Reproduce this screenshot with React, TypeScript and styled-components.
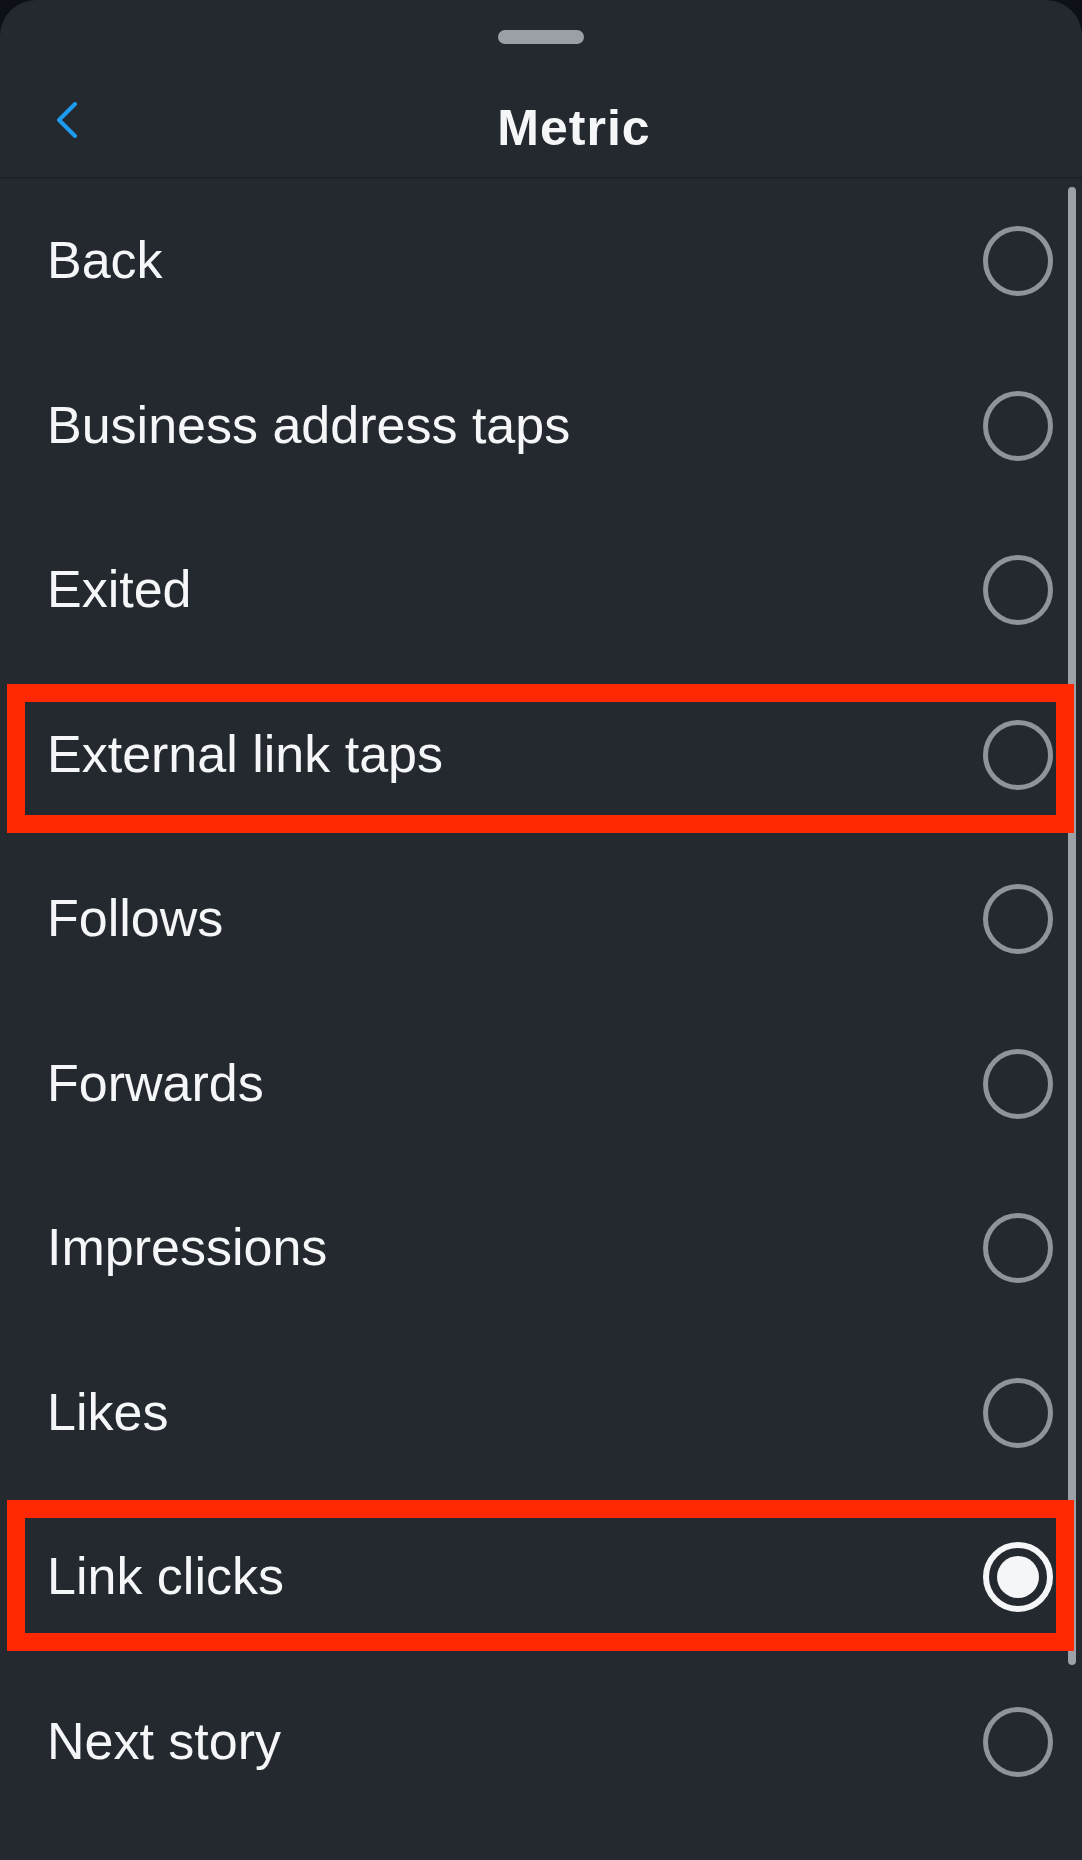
import React from 'react';
import styled, { createGlobalStyle } from 'styled-components';

const GlobalStyle = createGlobalStyle`
	html, body {
		margin: 0;
		padding: 0;
		background: #0d1117;
	}
	body {
		font-family: 'Liberation Sans', Arial, sans-serif;
		-webkit-font-smoothing: antialiased;
	}
`;

const Sheet = styled.div`
	width: 1082px;
	min-height: 1860px;
	background: #242930;
	border-radius: 36px 36px 0 0;
	overflow: hidden;
	display: flex;
	flex-direction: column;
`;

const HandleWrap = styled.div`
	display: flex;
	justify-content: center;
	padding-top: 30px;
`;

const Handle = styled.div`
	width: 86px;
	height: 14px;
	border-radius: 7px;
	background: #9aa0a6;
`;

const Header = styled.header`
	display: flex;
	align-items: flex-start;
	height: 133px;
	border-bottom: 2px solid #1d2126;
`;

const BackButton = styled.button`
	width: 100px;
	padding: 58px 0 0 53px;
	margin: 0;
	border: none;
	background: transparent;
	display: flex;
	cursor: pointer;
`;

const Title = styled.h1`
	flex: 1;
	margin: 0;
	padding: 59px 34px 0 0;
	text-align: center;
	color: #f5f6f7;
	font-size: 50px;
	font-weight: 700;
	letter-spacing: 1px;
	line-height: 1;
`;

const List = styled.div`
	position: relative;
	display: flex;
	flex-direction: column;
`;

const Row = styled.div`
	position: relative;
	height: 164.5px;
	display: flex;
	align-items: center;
	justify-content: space-between;
	padding: 0 29px 0 47px;
	box-sizing: border-box;
`;

const Label = styled.span`
	color: #f5f6f7;
	font-size: 52px;
	line-height: 1.15;
`;

const Radio = styled.span<{ $checked?: boolean }>`
	width: 70px;
	height: 70px;
	box-sizing: border-box;
	border-radius: 50%;
	border: ${(p) => (p.$checked ? '6px solid #f5f6f7' : '5px solid #8e949a')};
	display: flex;
	align-items: center;
	justify-content: center;

	&::after {
		content: '';
		display: ${(p) => (p.$checked ? 'block' : 'none')};
		width: 42px;
		height: 42px;
		border-radius: 50%;
		background: #f5f6f7;
	}
`;

const Highlight = styled.div<{ $top: number; $bottom: number }>`
	position: absolute;
	z-index: 2;
	left: 7px;
	right: 8px;
	top: ${(p) => p.$top}px;
	bottom: ${(p) => p.$bottom}px;
	border: 18px solid #ff2800;
	pointer-events: none;
`;

const Scrollbar = styled.div`
	position: absolute;
	z-index: 1;
	right: 6px;
	top: 8px;
	width: 8px;
	height: 1478px;
	border-radius: 4px;
	background: #9ba1a6;
`;

const ChevronLeft = () => (
	<svg width="28" height="36" viewBox="0 0 28 36" fill="none">
		<path
			d="M22 2 L6 18 L22 34"
			stroke="#1d9bf0"
			strokeWidth="4"
			strokeLinecap="round"
			strokeLinejoin="round"
		/>
	</svg>
);

const metrics = [
	'Back',
	'Business address taps',
	'Exited',
	'External link taps',
	'Follows',
	'Forwards',
	'Impressions',
	'Likes',
	'Link clicks',
	'Next story',
];

// annotation boxes drawn over some rows
const highlights: Record<string, { top: number; bottom: number }> = {
	'External link taps': { top: 11, bottom: 4 },
	'Link clicks': { top: 5, bottom: 9 },
};

const selected = 'Link clicks';

export default function App() {
	return (
		<>
			<GlobalStyle />
			<Sheet>
				<HandleWrap>
					<Handle />
				</HandleWrap>
				<Header>
					<BackButton aria-label="Back">
						<ChevronLeft />
					</BackButton>
					<Title>Metric</Title>
				</Header>
				<List>
					{metrics.map((m) => (
						<Row key={m}>
							<Label>{m}</Label>
							<Radio $checked={m === selected} />
							{highlights[m] && (
								<Highlight $top={highlights[m].top} $bottom={highlights[m].bottom} />
							)}
						</Row>
					))}
					<Scrollbar />
				</List>
			</Sheet>
		</>
	);
}
